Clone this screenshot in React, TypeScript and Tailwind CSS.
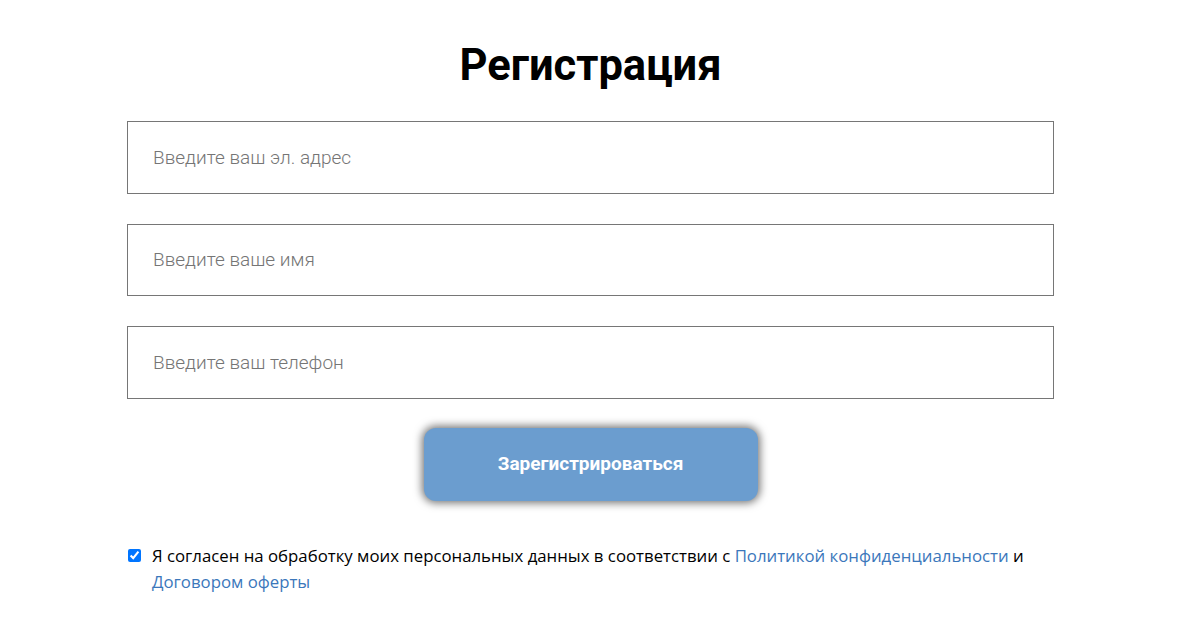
import React from "react";

export default function App() {
  return (
    <div className="min-h-[641px] bg-white">
      <div className="ml-[127px] w-[927px] pt-[36px] flex flex-col">
        <h1 className="text-center text-[43.5px] leading-[60px] font-bold text-black font-['Roboto',sans-serif]">
          Регистрация
        </h1>
        <form className="mt-[25px] flex flex-col gap-[30px]">
          <input
            type="email"
            placeholder="Введите ваш эл. адрес"
            className="h-[72.5px] w-full border border-[#767676] px-[25px] text-[19px] font-light font-['Roboto',sans-serif] text-black placeholder:text-[#757575] outline-none"
          />
          <input
            type="text"
            placeholder="Введите ваше имя"
            className="h-[72.5px] w-full border border-[#767676] px-[25px] text-[19px] font-light font-['Roboto',sans-serif] text-black placeholder:text-[#757575] outline-none"
          />
          <input
            type="tel"
            placeholder="Введите ваш телефон"
            className="h-[72.5px] w-full border border-[#767676] px-[25px] text-[19px] font-light font-['Roboto',sans-serif] text-black placeholder:text-[#757575] outline-none"
          />
        </form>
        <div className="mt-[29px] flex justify-center">
          <button
            type="button"
            className="w-[334px] h-[73px] rounded-[12px] bg-[#6b9dcf] text-white text-[19px] font-bold font-['Roboto',sans-serif] shadow-[0_0_8px_2px_rgba(0,0,0,0.55)]"
          >
            Зарегистрироваться
          </button>
        </div>
        <label className="mt-[42px] flex items-start text-[16.8px] leading-[26px] text-black font-['Open_Sans',sans-serif]">
          <input
            type="checkbox"
            defaultChecked
            className="mt-[6px] ml-[1px] mr-[11px] w-[13px] h-[13px] shrink-0 accent-[#0075ff]"
          />
          <span>
            Я согласен на обработку моих персональных данных в соответствии с{" "}
            <a href="#" className="text-[#3b77bb]">Политикой конфиденциальности</a> и{" "}
            <a href="#" className="text-[#3b77bb]">Договором оферты</a>
          </span>
        </label>
      </div>
    </div>
  );
}
